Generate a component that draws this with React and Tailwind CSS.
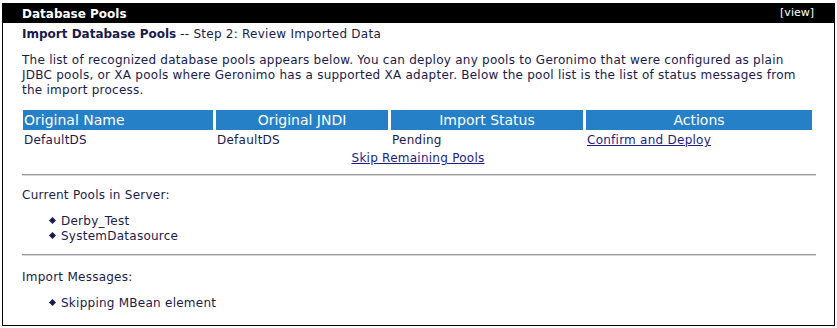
import React from "react";

const pools = [
  { name: "DefaultDS", jndi: "DefaultDS", status: "Pending" },
];

const current = ["Derby_Test", "SystemDatasource"];
const messages = ["Skipping MBean element"];

function Bullets({ items }) {
  return (
    <ul className="mt-[11px] pl-[28px]">
      {items.map((it) => (
        <li key={it} className="flex items-center h-[15px]">
          <span className="w-[5px] h-[5px] bg-[#1a1a4e] rotate-45 mr-[6px]" />
          {it}
        </li>
      ))}
    </ul>
  );
}

function Rule() {
  return <div className="mr-[18px] border-t border-t-[#9a9a9a] border-b border-b-[#d8d8d8]" />;
}

export default function App() {
  return (
    <div className="bg-white w-[837px] h-[328px] pt-[3px] px-[2px] font-['DejaVu_Sans',Verdana,sans-serif] text-[12px] tracking-[0.25px] text-[#1a1a4e]">
      <div className="border border-black h-[323px]">
        {/* header bar */}
        <div className="bg-black text-white h-[19px] flex items-center justify-between pl-[19px] pr-[20px]">
          <span className="font-bold text-[12px] tracking-normal">Database Pools</span>
          <span className="text-[11px] tracking-normal">[view]</span>
        </div>

        <div className="pl-[19px] pt-[2px]">
          <div className="h-[17px] flex items-center">
            <span className="font-bold tracking-normal">Import Database Pools</span>
            <span className="ml-[4px]">-- Step 2: Review Imported Data</span>
          </div>

          <p className="mt-[11px] leading-[15px] pr-[20px]">
            The list of recognized database pools appears below. You can deploy any pools to Geronimo that were configured as plain JDBC pools, or XA pools where Geronimo has a supported XA adapter. Below the pool list is the list of status messages from the import process.
          </p>

          {/* pools table */}
          <div className="mt-[12px] ml-[1px] grid grid-cols-[190px_172px_192px_226px] gap-x-[3px]">
            <div className="bg-[#2680c8] text-white text-[14px] tracking-normal h-[20px] flex items-center px-[1px]">Original Name</div>
            <div className="bg-[#2680c8] text-white text-[14px] tracking-normal h-[20px] flex items-center justify-center">Original JNDI</div>
            <div className="bg-[#2680c8] text-white text-[14px] tracking-normal h-[20px] flex items-center justify-center">Import Status</div>
            <div className="bg-[#2680c8] text-white text-[14px] tracking-normal h-[20px] flex items-center justify-center">Actions</div>
            {pools.map((p) => (
              <React.Fragment key={p.name}>
                <div className="h-[20px] flex items-center pl-[1px]">{p.name}</div>
                <div className="h-[20px] flex items-center pl-[1px]">{p.jndi}</div>
                <div className="h-[20px] flex items-center pl-[1px]">{p.status}</div>
                <div className="h-[20px] flex items-center pl-[1px]">
                  <a href="#" className="underline text-[#1c1c8a]">Confirm and Deploy</a>
                </div>
              </React.Fragment>
            ))}
          </div>
          <div className="text-center h-[16px] flex items-center justify-center pr-[20px]">
            <a href="#" className="underline text-[#1c1c8a]">Skip Remaining Pools</a>
          </div>

          <div className="mt-[8px]"><Rule /></div>

          <div className="mt-[11px] h-[15px] flex items-center">Current Pools in Server:</div>
          <Bullets items={current} />

          <div className="mt-[11px]"><Rule /></div>

          <div className="mt-[13px] h-[15px] flex items-center">Import Messages:</div>
          <Bullets items={messages} />
        </div>
      </div>
    </div>
  );
}
